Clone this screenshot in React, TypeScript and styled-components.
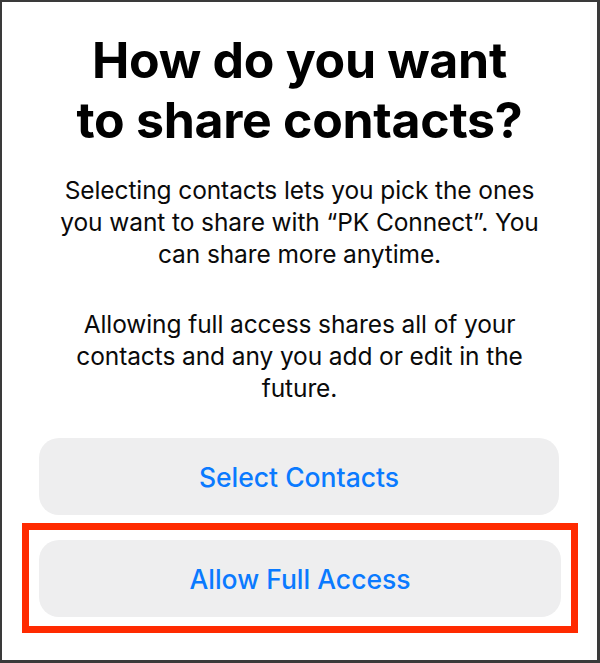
import styled, { createGlobalStyle } from "styled-components";

const GlobalStyle = createGlobalStyle`
  html, body {
    margin: 0;
    padding: 0;
    background: #ffffff;
  }
  body {
    font-family: Inter, "Noto Sans", "Liberation Sans", sans-serif;
    -webkit-font-smoothing: antialiased;
  }
`;

const Sheet = styled.div`
  box-sizing: border-box;
  width: 600px;
  height: 663px;
  border-style: solid;
  border-color: #3a3a3a;
  border-width: 2px 3px 3px 2px;
  background: #ffffff;
  display: flex;
  flex-direction: column;
  align-items: center;
  padding-top: 28px;
`;

const Title = styled.h1`
  margin: 0;
  font-size: 50px;
  line-height: 60px;
  font-weight: 700;
  letter-spacing: -0.3px;
  color: #000000;
  text-align: center;
  white-space: nowrap;
`;

const Body = styled.p<{ $gap?: number }>`
  margin: ${({ $gap }) => $gap ?? 0}px 0 0;
  font-size: 24.5px;
  line-height: 32px;
  font-weight: 400;
  letter-spacing: -0.1px;
  color: #0a0a0a;
  text-align: center;
  white-space: nowrap;
`;

const Actions = styled.div`
  align-self: stretch;
  display: flex;
  flex-direction: column;
  margin-top: 34px;
  gap: 8px;
`;

const Highlight = styled.div`
  margin: 0 19px 0 20px;
  border: 7px solid #ff2a00;
  padding: 10px 10px 9px;
`;

const Button = styled.button<{ $inset?: boolean }>`
  box-sizing: border-box;
  margin: ${({ $inset }) => ($inset ? "0 38px 0 37px" : "0")};
  width: ${({ $inset }) => ($inset ? "auto" : "100%")};
  height: 77px;
  border: none;
  border-radius: 20px;
  background: #eeeeef;
  color: #0a7aff;
  font-family: Inter, "Noto Sans", "Liberation Sans", sans-serif;
  font-size: 26.5px;
  font-weight: 500;
  cursor: pointer;
`;

export default function App() {
  return (
    <>
      <GlobalStyle />
      <Sheet>
        <Title>
          How do you want
          <br />
          to share contacts?
        </Title>
        <Body $gap={24}>
          Selecting contacts lets you pick the ones
          <br />
          you want to share with “PK Connect”. You
          <br />
          can share more anytime.
        </Body>
        <Body $gap={38}>
          Allowing full access shares all of your
          <br />
          contacts and any you add or edit in the
          <br />
          future.
        </Body>
        <Actions>
          <Button $inset>Select Contacts</Button>
          <Highlight>
            <Button>Allow Full Access</Button>
          </Highlight>
        </Actions>
      </Sheet>
    </>
  );
}
